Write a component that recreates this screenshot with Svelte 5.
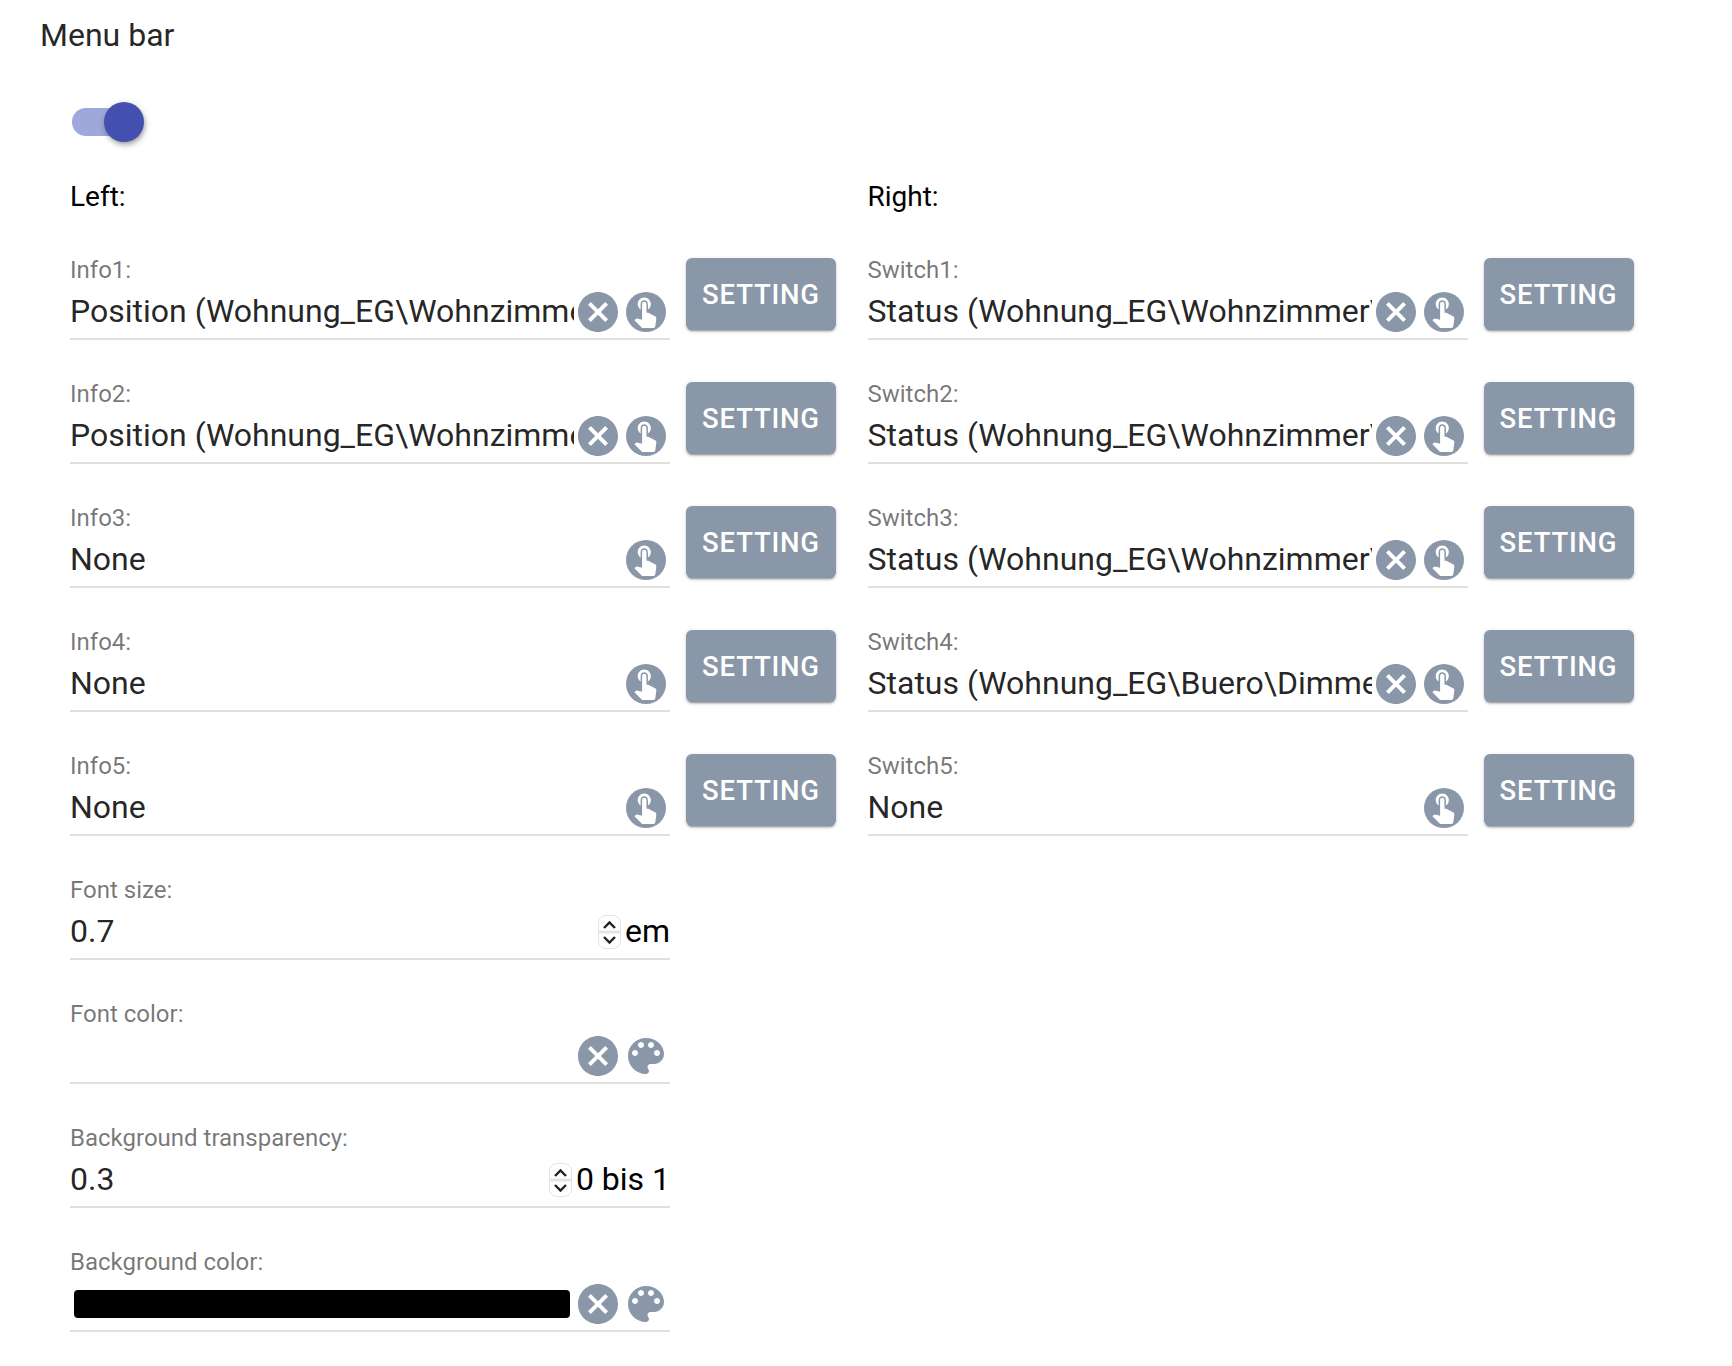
<script>
  const clear = "M12 2C6.47 2 2 6.47 2 12s4.47 10 10 10 10-4.47 10-10S17.53 2 12 2zm5 13.59L15.59 17 12 13.41 8.41 17 7 15.59 10.59 12 7 8.41 8.41 7 12 10.59 15.59 7 17 8.41 13.41 12 17 15.59z";
  const palette = "M12 3c-4.97 0-9 4.03-9 9s4.03 9 9 9c.83 0 1.5-.67 1.5-1.5 0-.39-.15-.74-.39-1.01-.23-.26-.38-.61-.38-.99 0-.83.67-1.5 1.5-1.5H16c2.76 0 5-2.24 5-5 0-4.42-4.03-8-9-8zm-5.5 9c-.83 0-1.5-.67-1.5-1.5S5.67 9 6.5 9 8 9.67 8 10.5 7.33 12 6.5 12zm3-4C8.67 8 8 7.33 8 6.5S8.67 5 9.5 5s1.5.67 1.5 1.5S10.33 8 9.5 8zm5 0c-.83 0-1.5-.67-1.5-1.5S13.67 5 14.5 5s1.5.67 1.5 1.5S15.33 8 14.5 8zm3 4c-.83 0-1.5-.67-1.5-1.5S16.67 9 17.5 9s1.5.67 1.5 1.5-.67 1.5-1.5 1.5z";
  const touch = "M9 11.24V7.5C9 6.12 10.12 5 11.5 5S14 6.12 14 7.5v3.74c1.21-.81 2-2.18 2-3.74C16 5.01 13.99 3 11.5 3S7 5.01 7 7.5c0 1.56.79 2.93 2 3.74zm9.84 4.63l-4.54-2.26c-.17-.07-.35-.11-.54-.11H13v-6c0-.83-.67-1.5-1.5-1.5S10 6.67 10 7.5v10.74l-3.43-.72c-.08-.01-.15-.03-.24-.03-.31 0-.59.13-.79.33l-.79.8 4.94 4.94c.27.27.65.44 1.06.44h6.79c.75 0 1.36-.55 1.47-1.28l.75-5.27c.01-.07.02-.14.02-.2 0-.62-.38-1.16-.94-1.4z";

  const pos = "Position (Wohnung_EG\\Wohnzimmer\\Rollladen)";
  const st = "Status (Wohnung_EG\\Wohnzimmer\\Licht)";
  const left = [
    { label: "Info1:", value: pos, clear: true },
    { label: "Info2:", value: pos, clear: true },
    { label: "Info3:", value: "None" },
    { label: "Info4:", value: "None" },
    { label: "Info5:", value: "None" },
  ];
  const right = [
    { label: "Switch1:", value: st, clear: true },
    { label: "Switch2:", value: st, clear: true },
    { label: "Switch3:", value: st, clear: true },
    { label: "Switch4:", value: "Status (Wohnung_EG\\Buero\\Dimmer)", clear: true },
    { label: "Switch5:", value: "None" },
  ];
</script>

{#snippet clearIcon()}
  <span class="ic"><svg viewBox="0 0 24 24" width="48" height="48"><path d={clear} /></svg></span>
{/snippet}

{#snippet touchIcon()}
  <span class="ic">
    <svg class="disc" viewBox="0 0 40 40" width="40" height="40">
      <circle cx="20" cy="20" r="20" />
      <g transform="translate(1.5 1) scale(1.46)"><path class="hand" d={touch} /></g>
    </svg>
  </span>
{/snippet}

{#snippet paletteIcon()}
  <span class="ic"><svg viewBox="0 0 24 24" width="48" height="48"><path d={palette} /></svg></span>
{/snippet}

{#snippet spinner()}
  <span class="spin">
    <svg viewBox="0 0 23 34" width="23" height="34">
      <path d="M6 13l5.5-5.5L17 13M6 22l5.5 5.5L17 22" />
    </svg>
  </span>
{/snippet}

{#snippet selectRow(r)}
  <div class="row">
    <div class="field">
      <span class="lbl">{r.label}</span>
      <div class="ctl">
        <input class="val" readonly value={r.value} />
        {#if r.clear}{@render clearIcon()}{/if}
        {@render touchIcon()}
      </div>
    </div>
    <button class="btn">Setting</button>
  </div>
{/snippet}

<div class="page">
  <h1 class="title">Menu bar</h1>
  <div class="body">
    <span class="switch"><span class="track"></span><span class="thumb"></span></span>
    <div class="cols">
      <div class="col">
        <p class="head">Left:</p>
        {#each left as r}{@render selectRow(r)}{/each}

        <div class="field wide">
          <span class="lbl">Font size:</span>
          <div class="ctl">
            <input class="val" readonly value="0.7" />
            {@render spinner()}
            <span class="unit">em</span>
          </div>
        </div>

        <div class="field wide">
          <span class="lbl">Font color:</span>
          <div class="ctl">
            <input class="val" readonly value="" />
            {@render clearIcon()}
            {@render paletteIcon()}
          </div>
        </div>

        <div class="field wide">
          <span class="lbl">Background transparency:</span>
          <div class="ctl">
            <input class="val" readonly value="0.3" />
            {@render spinner()}
            <span class="unit">0 bis 1</span>
          </div>
        </div>

        <div class="field wide">
          <span class="lbl">Background color:</span>
          <div class="ctl">
            <div class="swatchwrap"><div class="swatch"></div></div>
            {@render clearIcon()}
            {@render paletteIcon()}
          </div>
        </div>
      </div>

      <div class="col">
        <p class="head">Right:</p>
        {#each right as r}{@render selectRow(r)}{/each}
      </div>
    </div>
  </div>
</div>

<style>
  :global(body) {
    margin: 0;
    background: #fff;
    font-family: Roboto, "Liberation Sans", sans-serif;
  }
  .page {
    height: 1366px;
    box-sizing: border-box;
    padding: 16px 0 0 40px;
    overflow: hidden;
  }
  .title {
    margin: 0;
    font-size: 32px;
    line-height: 38px;
    font-weight: 400;
    color: rgba(0, 0, 0, 0.87);
  }
  .body {
    padding: 48px 0 0 30px;
  }
  .switch {
    display: block;
    position: relative;
    width: 76px;
    height: 40px;
  }
  .track {
    position: absolute;
    left: 2px;
    top: 6px;
    width: 68px;
    height: 28px;
    border-radius: 14px;
    background: #9fa8da;
  }
  .thumb {
    position: absolute;
    left: 34px;
    top: 0;
    width: 40px;
    height: 40px;
    border-radius: 50%;
    background: #4350af;
    box-shadow: 1px 2px 4px -1px rgba(0,0,0,.25), 1px 4px 5px rgba(0,0,0,.14), 1px 1px 10px rgba(0,0,0,.12);
  }
  .cols {
    display: grid;
    grid-template-columns: 766px 766px;
    column-gap: 31.5px;
    align-items: start;
    margin-top: 33px;
  }
  .head {
    margin: 0 0 39px;
    font-size: 28px;
    line-height: 44px;
    color: #000;
  }
  .row {
    display: flex;
    gap: 16px;
    align-items: flex-start;
    margin-bottom: 42px;
  }
  .field {
    width: 600px;
    flex: none;
    border-bottom: 2px solid #e0e0e0;
    box-sizing: border-box;
    height: 82px;
  }
  .field.wide {
    margin-bottom: 42px;
  }
  .lbl {
    display: block;
    font-size: 24px;
    line-height: 24px;
    height: 30px;
    color: rgba(0, 0, 0, 0.54);
  }
  .ctl {
    display: flex;
    align-items: center;
    height: 48px;
  }
  .val {
    flex: 1;
    min-width: 0;
    width: 0;
    border: 0;
    outline: 0;
    padding: 0 0 2px;
    margin: 0;
    box-sizing: border-box;
    background: transparent;
    font: inherit;
    font-size: 32px;
    line-height: 46px;
    height: 48px;
    color: rgba(0, 0, 0, 0.87);
  }
  .ic {
    flex: none;
    width: 48px;
    height: 48px;
    display: flex;
    align-items: center;
    justify-content: center;
  }
  .ic svg {
    display: block;
    fill: #8997a8;
  }
  .disc .hand {
    fill: #fff;
  }
  .spin {
    flex: none;
    width: 23px;
    height: 34px;
    box-sizing: border-box;
    margin-right: 4px;
    border-radius: 8px;
    border: 1px solid #e4e4e4;
    background: linear-gradient(#fff 0 42%, #dedede 50%, #fff 58%);
    display: block;
    overflow: hidden;
  }
  .spin svg {
    display: block;
    margin: -1px;
    fill: none;
    stroke: #222;
    stroke-width: 2.4;
  }
  .unit {
    flex: none;
    font-size: 32px;
    color: #000;
    padding-bottom: 2px;
  }
  .swatchwrap {
    flex: 1;
    min-width: 0;
    padding: 0 4px;
  }
  .swatch {
    height: 28px;
    background: #000;
    border-radius: 4px;
  }
  .btn {
    flex: none;
    width: 150px;
    height: 72px;
    margin: 0;
    padding: 0;
    border: 0;
    border-radius: 6px;
    background: #8997a8;
    color: #fff;
    font-family: inherit;
    font-size: 27.5px;
    font-weight: 500;
    letter-spacing: 0.8px;
    text-transform: uppercase;
    box-shadow: 0 3px 1px -2px rgba(0,0,0,.2), 0 2px 2px rgba(0,0,0,.14), 0 1px 5px rgba(0,0,0,.12);
  }
</style>
